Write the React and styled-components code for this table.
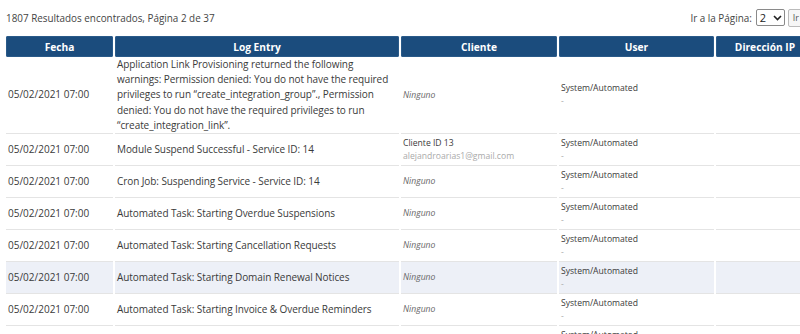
import React from "react"
import styled, { createGlobalStyle } from "styled-components"

const GlobalStyle = createGlobalStyle`
  html, body {
    margin: 0;
    padding: 0;
    overflow: hidden;
    background: #fff;
  }
  body {
    font-family: "Open Sans", "DejaVu Sans", sans-serif;
    color: #333;
  }
`

const Page = styled.div`
  width: 812px;
  padding: 0 6px;
`

const TopBar = styled.div`
  display: flex;
  align-items: center;
  justify-content: space-between;
  height: 35px;
  font-size: 9.9px;
  color: #444;
  padding-bottom: 1px;
  margin-right: 14px;
`

const PageJump = styled.div`
  display: flex;
  align-items: center;
  gap: 3px;
`

const Select = styled.div`
  display: flex;
  align-items: center;
  justify-content: space-between;
  width: 29px;
  height: 17px;
  box-sizing: border-box;
  border: 1px solid #8a8a8a;
  border-radius: 2px;
  padding: 0 2px 0 3px;
  font-size: 11px;
  color: #222;
  margin-left: 1px;
`

const GoButton = styled.button`
  height: 18px;
  padding: 0 4px;
  font-family: inherit;
  font-size: 9px;
  color: #555;
  background: #f6f6f6;
  border: 1px solid #bbb;
  border-radius: 2px;
`

const Table = styled.table`
  width: 100%;
  table-layout: fixed;
  border-collapse: separate;
  border-spacing: 2px 0;
  margin-left: -2px;
`

const Th = styled.th`
  background: #1b4c7d;
  color: #fff;
  font-size: 10.2px;
  font-weight: 700;
  height: 21px;
  padding: 0;
  border-radius: 2px;
  box-shadow: inset 0 0 0 1px #2a5a89;
`

const Row = styled.tr`
  height: 32px;
  background: ${p => (p.$hl ? "#edf0f7" : "transparent")};
`

const Td = styled.td`
  vertical-align: middle;
  padding: 0 ${p => (p.$entry ? "0 0 2px" : "2px")};
  border-bottom: 1px solid #e4e4e4;
  font-size: ${p => (p.$small ? "8.6px" : "10px")};
  line-height: ${p => (p.$small ? "13px" : "15.2px")};
  letter-spacing: ${p => (p.$entry ? "-0.08px" : "0")};
  color: #3a3a3a;
`

const None = styled.span`
  font-style: italic;
  color: #666;
`

const Sub = styled.div`
  color: #aaa;
`

const rows = [
  {
    entry:
      "Application Link Provisioning returned the following warnings: Permission denied: You do not have the required privileges to run \u201ccreate_integration_group\u201d., Permission denied: You do not have the required privileges to run \u201ccreate_integration_link\u201d.",
  },
  { entry: "Module Suspend Successful - Service ID: 14", client: ["Cliente ID 13", "alejandroarias1@gmail.com"] },
  { entry: "Cron Job: Suspending Service - Service ID: 14" },
  { entry: "Automated Task: Starting Overdue Suspensions" },
  { entry: "Automated Task: Starting Cancellation Requests" },
  { entry: "Automated Task: Starting Domain Renewal Notices", hl: true },
  { entry: "Automated Task: Starting Invoice & Overdue Reminders" },
  { entry: "Automated Task: Starting Late Fees" },
]

const App = () => (
  <Page>
    <GlobalStyle />
    <TopBar>
      <span>1807 Resultados encontrados, Página 2 de 37</span>
      <PageJump>
        <span>Ir a la Página:</span>
        <Select>
          2
          <svg width="9" height="6" viewBox="0 0 9 6">
            <path d="M1 1l3.5 3.5L8 1" fill="none" stroke="#222" strokeWidth="1.6" />
          </svg>
        </Select>
        <GoButton>Ir</GoButton>
      </PageJump>
    </TopBar>
    <Table>
      <colgroup>
        <col style={{ width: 107 }} />
        <col style={{ width: 284 }} />
        <col style={{ width: 156 }} />
        <col style={{ width: 155 }} />
        <col />
      </colgroup>
      <thead>
        <tr>
          <Th>Fecha</Th>
          <Th>Log Entry</Th>
          <Th>Cliente</Th>
          <Th>User</Th>
          <Th>Dirección IP</Th>
        </tr>
      </thead>
      <tbody>
        {rows.map((r, i) => (
          <Row key={i} $hl={r.hl}>
            <Td>05/02/2021 07:00</Td>
            <Td $entry>{r.entry}</Td>
            <Td $small>
              {r.client ? (
                <>
                  <div>{r.client[0]}</div>
                  <Sub>{r.client[1]}</Sub>
                </>
              ) : (
                <None>Ninguno</None>
              )}
            </Td>
            <Td $small>
              <div>System/Automated</div>
              <Sub>-</Sub>
            </Td>
            <Td></Td>
          </Row>
        ))}
      </tbody>
    </Table>
  </Page>
)

export default App
